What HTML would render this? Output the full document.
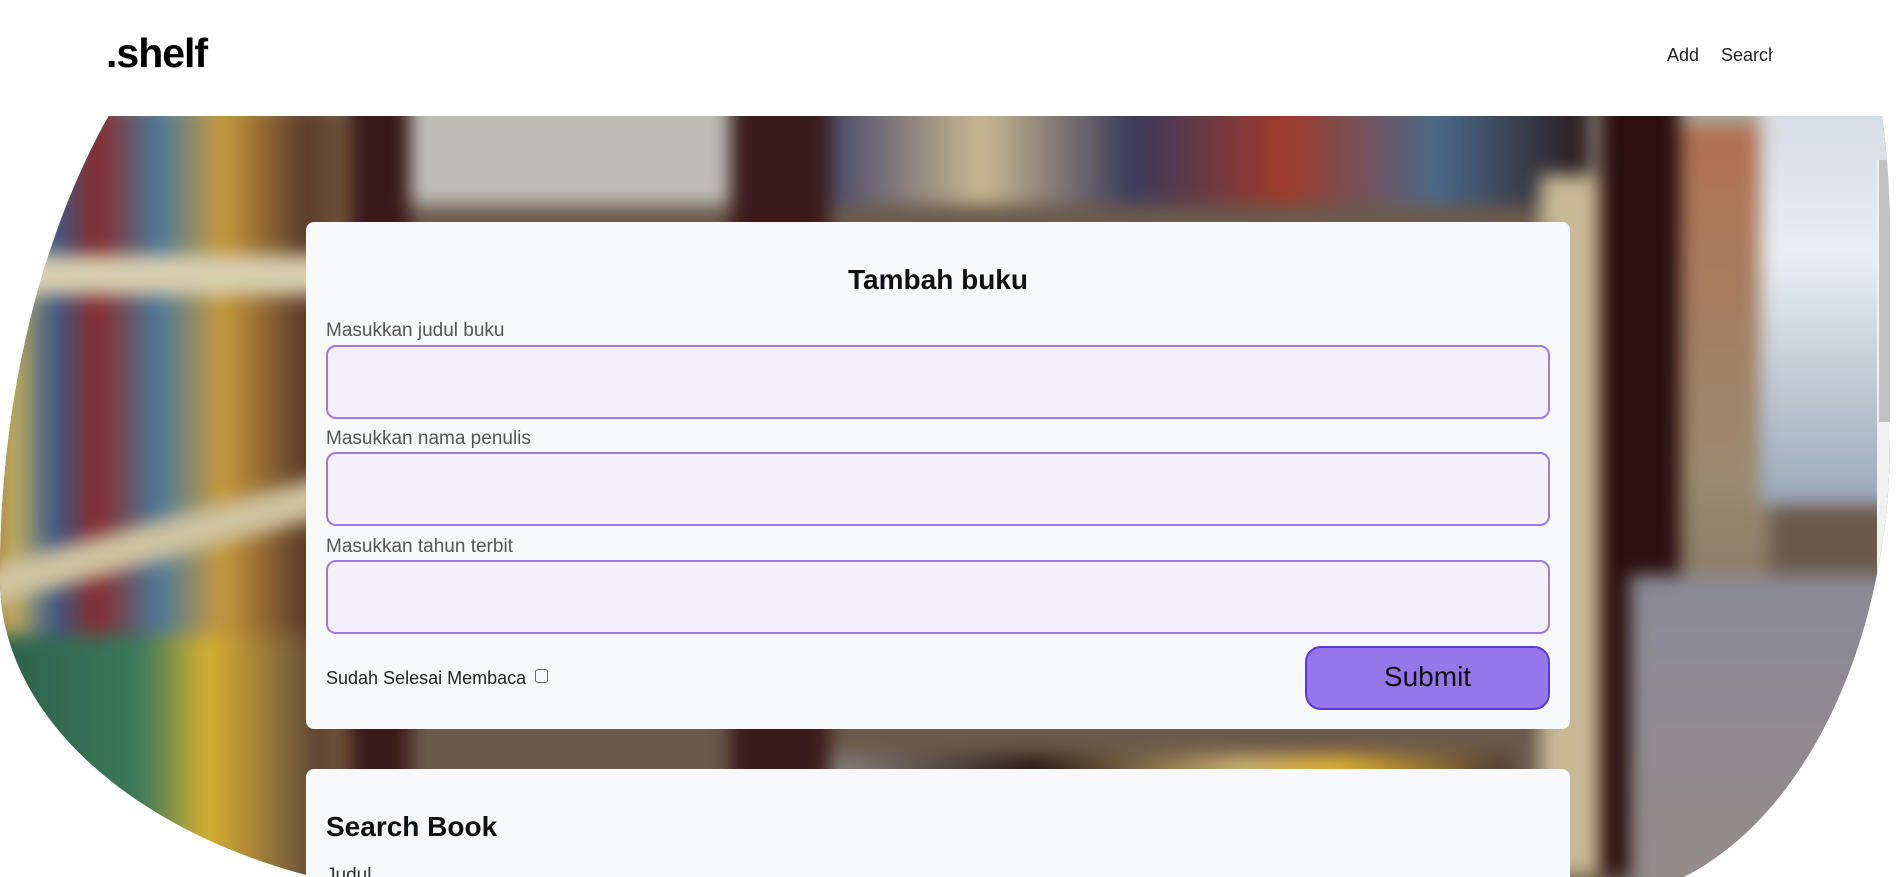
<!DOCTYPE html>
<html style="width:1896px;height:877px;overflow:hidden"><head><meta charset="utf-8"><style>
*{box-sizing:border-box;margin:0;padding:0}
body{width:1896px;height:877px;overflow:hidden;background:#fff;font-family:"Liberation Sans",sans-serif;position:relative}
header{position:absolute;left:0;top:0;width:1896px;height:116px;background:#fff;z-index:5}
.logo{position:absolute;left:106px;top:30px;font-size:41px;font-weight:bold;letter-spacing:-1px;color:#000}
.nav{position:absolute;top:45px;font-size:18px;color:#222}
.bg{position:absolute;left:0;top:-95px;width:1890px;height:995px;overflow:hidden;
border-radius:400px 120px 300px 500px / 670px 330px 460px 320px;background:#6b5a4c}
.blur{position:absolute;inset:-30px;filter:blur(9px)}
.blur div{position:absolute}
.sb{position:absolute;left:1877px;top:255px;width:17px;height:420px;background:#f1f1f1;z-index:2}
.sb i{position:absolute;left:2px;top:0;width:13px;height:262px;background:#c1c1c1}
.card{position:absolute;left:306px;width:1264px;background:#f7f8fa;border-radius:8px;z-index:3}
.c1{top:222px;height:507px}
.c2{top:769px;height:200px}
h2{font-size:28px;font-weight:bold;color:#111}
.lab{position:absolute;left:20px;font-size:19px;color:#555}
.inp{position:absolute;left:20px;width:1224px;height:74px;background:#f3effd;border:2px solid #9a7ae6;border-radius:10px}
.btn{position:absolute;left:999px;top:424px;width:245px;height:64px;background:#9577e9;border:2px solid #5b3ad6;border-radius:16px;font-size:28px;color:#111;text-align:center;line-height:58px}
</style></head><body>
<header>
<div class="logo">.shelf</div>
<div class="nav" style="left:1667px">Add</div>
<div class="nav" style="left:1721px;width:52px;overflow:hidden;white-space:nowrap">Search</div>
</header>
<div class="bg">
<div class="blur">
<div style="left:0;top:0;width:1960px;height:330px;background:linear-gradient(#cfcfcb,#9e9a90)"></div>
<div style="left:0;top:230px;width:420px;height:800px;background:linear-gradient(90deg,#7a3a2a,#c9b35a 10%,#3a5a8a 20%,#8a2a2a 30%,#4a7a9a 45%,#c89a3a 60%,#5a3a2a 80%,#8a7a5a)"></div>
<div style="left:0;top:380px;width:420px;height:40px;background:#d8cfb0"></div>
<div style="left:0;top:640px;width:420px;height:40px;background:#cfc3a0;transform:skewY(-15deg)"></div>
<div style="left:0;top:760px;width:340px;height:300px;background:linear-gradient(90deg,#2a5a4a,#3a7a5a 50%,#d8b030 70%,#6a5040)"></div>
<div style="left:380px;top:200px;width:60px;height:800px;background:#3a1a18"></div>
<div style="left:440px;top:200px;width:400px;height:130px;background:#bdbcb6"></div>
<div style="left:760px;top:200px;width:100px;height:800px;background:#3a1c1c"></div>
<div style="left:860px;top:180px;width:760px;height:150px;background:linear-gradient(90deg,#4a4a6a,#c8b890,#3a3a5a,#a03a2a,#4a6a8a,#2a1a1a)"></div>
<div style="left:860px;top:880px;width:680px;height:120px;background:linear-gradient(90deg,#8a8480,#2a1a14 30%,#c8b070 60%,#e0b030 75%,#4a3a30)"></div>
<div style="left:1570px;top:300px;width:60px;height:700px;background:#c8b894"></div>
<div style="left:1630px;top:200px;width:80px;height:800px;background:#2a1010"></div>
<div style="left:1710px;top:250px;width:90px;height:700px;background:linear-gradient(#b07050,#9a8a70,#6a5a50)"></div>
<div style="left:1790px;top:130px;width:170px;height:500px;background:linear-gradient(#c8d0d6,#e8eef2 50%,#9aa8b8)"></div>
<div style="left:1660px;top:700px;width:300px;height:320px;background:linear-gradient(#8a8a94,#948c8a)"></div>
</div>
<div class="sb"><i></i></div>
</div>
<div class="card c1">
<h2 style="position:absolute;top:42px;width:100%;text-align:center">Tambah buku</h2>
<div class="lab" style="top:98px">Masukkan judul buku</div>
<div class="inp" style="top:123px"></div>
<div class="lab" style="top:206px">Masukkan nama penulis</div>
<div class="inp" style="top:230px"></div>
<div class="lab" style="top:314px">Masukkan tahun terbit</div>
<div class="inp" style="top:338px"></div>
<div style="position:absolute;left:20px;top:446px;font-size:18px;color:#222">Sudah Selesai Membaca <span style="display:inline-block;width:13px;height:14px;border:1.5px solid #666;border-radius:3px;vertical-align:1px;margin-left:4px"></span></div>
<div class="btn">Submit</div>
</div>
<div class="card c2">
<h2 style="position:absolute;left:20px;top:42px">Search Book</h2>
<div style="position:absolute;left:20px;top:96px;font-size:19px;color:#333">Judul</div>
</div>
</body></html>
